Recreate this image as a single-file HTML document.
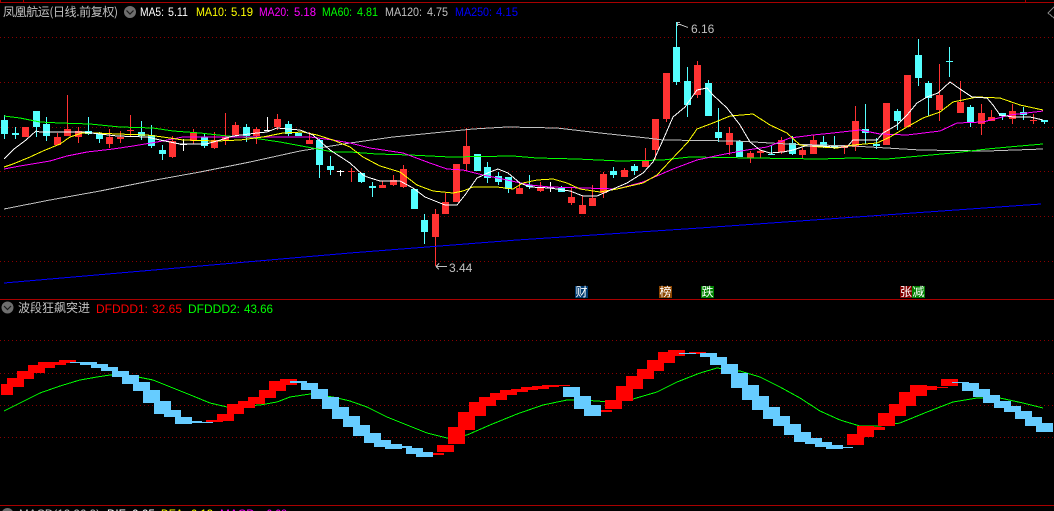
<!DOCTYPE html>
<html lang="zh">
<head>
<meta charset="utf-8">
<title>凤凰航运</title>
<style>
html,body{margin:0;padding:0;background:#000;width:1054px;height:511px;overflow:hidden}
svg{display:block;position:absolute;left:0;top:0}
text{font-family:"Liberation Sans","WenQuanYi Zen Hei","Noto Sans CJK SC",sans-serif;font-size:12px}
.cn{font-family:"WenQuanYi Zen Hei","Noto Sans CJK SC",sans-serif;font-size:12px}
polyline{fill:none;stroke-width:1}
</style>
</head>
<body>
<svg width="1054" height="511" viewBox="0 0 1054 511" xmlns="http://www.w3.org/2000/svg">
<rect width="1054" height="511" fill="#000"/>
<g shape-rendering="crispEdges">
<path d="M0 2.5H1054M0.5 0V2M23.5 0V2M1025.5 0V2M0 299.5H1054M0 505.5H1054" stroke="#a80000" fill="none"/>
<path d="M0 37.5H1054M0 82.5H1054M0 127.5H1054M0 171.5H1054M0 216.5H1054M0 261.5H1054M0 340.5H1054M0 373.5H1054M0 405.5H1054M0 437.5H1054" stroke="#8a0000" stroke-dasharray="1 3" fill="none"/>

<!-- cyan candles -->
<path stroke="#54ffff" fill="none" d="M4.5 115V139M15.5 127V139M36.5 111V137M46.5 117V141M88.5 117V135M99.5 132V143M141.5 121V140M151.5 125V148M162.5 145V160M204.5 134V148M246.5 124V142M288.5 121V136M298.5 133V136M319.5 139V178M330.5 156V175M361.5 173V183M372.5 182V197M424.5 214V244M487.5 162V183M498.5 172V185M508.5 177V193M529.5 175V189M561.5 186V192M613.5 167V178M634.5 164V175M676.5 22V85M687.5 67V117M708.5 80V116M718.5 108V142M739.5 140V157M771.5 145V155M792.5 136V155M823.5 136V148M834.5 136V149M865.5 104V144M876.5 138V149M897.5 109V130M918.5 39V86M928.5 81V116M949.5 47V77M970.5 105V127M1002.5 113V120M1023.5 107V120M1044.5 120V124"/>
<path fill="#54ffff" d="M1 120h7V134H1zM12 133h7V135H12zM33 111h7V127H33zM43 124h7V136H43zM85 131h7V134H85zM96 134h7V139H96zM138 132h7V136H138zM148 135h7V146H148zM159 150h7V154H159zM201 137h7V146H201zM243 127h7V136H243zM285 124h7V134H285zM295 133h7V136H295zM316 140h7V165H316zM327 166h7V170H327zM358 173h7V182H358zM369 186h7V188H369zM411 189h7V209H411zM421 220h7V232H421zM474 154h7V171H474zM484 167h7V178H484zM495 176h7V182H495zM505 177h7V189H505zM526 185h7V187H526zM558 188h7V192H558zM610 171h7V175H610zM631 166h7V171H631zM673 47h7V82H673zM684 81h7V105H684zM705 83h7V116H705zM715 132h7V138H715zM736 141h7V157H736zM768 154h7V155H768zM789 143h7V154H789zM820 142h7V147H820zM831 145h7V148H831zM862 129h7V133H862zM873 144h7V146H873zM894 111h7V121H894zM915 55h7V78H915zM925 83h7V98H925zM946 61h7V62H946zM967 107h7V122H967zM999 113h7V116H999zM1020 112h7V115H1020zM1041 120h7V122H1041z"/>

<!-- red candles -->
<path stroke="#ff3232" fill="none" d="M57.5 133V145M67.5 95V136M78.5 127V143M109.5 129V148M120.5 131V143M130.5 115V136M172.5 136V158M193.5 129V144M214.5 132V149M225.5 113V145M235.5 122V136M256.5 127V144M277.5 114V130M309.5 132V144M351.5 168V182M382.5 181V188M393.5 175V186M403.5 165V188M435.5 209V266M445.5 193V214M466.5 128V171M519.5 183V194M540.5 182V192M571.5 187V205M582.5 196V214M592.5 185V206M603.5 172V198M624.5 168V177M645.5 148V167M655.5 119V160M666.5 73V122M697.5 61V98M729.5 127V155M750.5 151V163M760.5 150V158M781.5 137V154M802.5 148V158M813.5 135V154M844.5 145V154M855.5 106V151M939.5 64V121M960.5 81V113M981.5 104V135M991.5 110V121M1012.5 104V124M1033.5 114V124"/>
<path fill="#ff3232" d="M22 127h7V137H22zM54 137h7V145H54zM64 129h7V136H64zM75 131h7V137H75zM106 137h7V144H106zM117 137h7V139H117zM127 130h7V131H127zM169 141h7V157H169zM190 132h7V141H190zM211 140h7V148H211zM222 137h7V140H222zM232 125h7V135H232zM253 129h7V136H253zM274 119h7V127H274zM306 140h7V144H306zM348 171h7V172H348zM379 185h7V188H379zM390 180h7V185H390zM400 169h7V187H400zM432 214h7V237H432zM442 202h7V214H442zM453 164h7V202H453zM463 146h7V164H463zM516 188h7V194H516zM537 188h7V191H537zM568 197h7V203H568zM579 205h7V214H579zM589 198h7V206H589zM600 174h7V193H600zM621 170h7V177H621zM642 160h7V167H642zM652 119h7V150H652zM663 73h7V119H663zM694 65h7V95H694zM726 133h7V145H726zM747 153h7V158H747zM757 151h7V153H757zM778 140h7V152H778zM799 150h7V155H799zM810 140h7V154H810zM841 145h7V148H841zM852 121h7V147H852zM883 103h7V145H883zM904 75h7V127H904zM936 95h7V110H936zM957 102h7V113H957zM978 113h7V124H978zM988 117h7V121H988zM1009 111h7V119H1009zM1030 120h7V121H1030z"/>

<!-- white doji -->
<path stroke="#fff" fill="none" d="M183.5 139V151M267.5 117V131M340.5 170V176M550.5 182V192M180 144.5H187M264 130.5H271M337 171.5H344M547 187.5H554"/>

<!-- moving averages -->
<polyline stroke="#c0c0c0" points="4,209 50,200 100,191 150,181 200,172 250,162 300,151 350,143 393,137 473,129 507,127 557,128 600,133 647,138 663,140 737,141 787,144 853,146 920,150 987,151 1043,149"/>
<polyline stroke="#00ff00" points="4,116 20,118 40,122 60,123 90,124 120,127 153,128 173,131 200,133 227,136 253,138 280,142 307,147 333,152 350,152 377,154 410,155 450,157 513,156 537,158 577,159 620,161 663,160 690,157 753,158 820,159 853,158 887,159 920,156 953,153 987,149 1020,146 1043,144"/>
<polyline stroke="#ff00ff" points="4,169 20,166 50,161 67,156 87,152 113,149 133,146 157,142 183,137 200,137 233,137 267,137 310,137 333,140 350,143 370,148 403,153 427,162 447,169 463,170 483,175 507,180 530,185 550,187 583,188 617,189 643,182 673,169 697,160 720,155 747,150 767,147 790,138 813,135 833,133 860,130 880,134 907,135 940,131 957,123 983,122 1010,115 1043,111"/>
<polyline stroke="#ffff00" points="4,167 13,164 30,157 43,151 60,144 70,137 82,133 97,133 117,134 147,135 163,137 183,140 217,141 240,140 263,137 283,133 303,132 317,135 333,140 350,147 363,157 380,166 400,172 417,185 433,191 453,193 463,191 473,187 497,187 513,189 523,183 537,180 553,179 567,183 580,189 600,192 617,189 630,186 643,183 657,175 670,161 688,142 697,129 713,123 730,116 753,114 770,125 787,133 800,145 820,147 837,148 853,145 877,143 890,137 907,127 923,118 940,112 953,102 977,97 1000,98 1020,105 1043,110"/>
<polyline stroke="#ffffff" points="4,159 14,149 26,140 36,131 40,132 83,132 117,136 147,137 160,140 180,144 206,144 217,141 233,136 257,133 267,132 277,128 300,130 313,135 330,150 350,163 363,175 367,177 380,181 400,181 413,188 425,197 445,205 457,205 465,195 477,178 490,172 498,169 508,173 520,183 530,187 550,188 570,191 583,196 597,196 613,189 627,183 643,173 653,162 663,140 673,117 685,107 697,90 707,88 713,95 727,108 740,125 750,142 760,150 770,153 783,152 793,150 805,146 820,146 833,147 847,147 853,140 877,140 883,133 897,125 907,115 917,103 927,97 938,93 950,82 960,89 972,97 987,98 993,105 1000,115 1013,117 1030,117 1043,120"/>
<polyline stroke="#0000ff" points="4,283 350,253 517,240 700,228 1041,204"/>

<!-- high/low callouts -->
<path stroke="#c0c0c0" fill="none" d="M677.5 22V26M678 22.5H680M678 24.5H680M680 24.5L688 27.5M436 266.5H447M436 266.5L439 263.5M436 266.5L439 269.5"/>

<!-- right chevron -->
<path stroke="#808080" fill="none" d="M1054 7L1048 13L1054 18"/>

<!-- oscillator signal -->
<polyline stroke="#00ff00" points="4,411 20,403 40,393 60,386 80,380 97,377 110,375 133,376 153,380 173,388 193,396 210,403 227,407 260,405 277,402 290,397 310,394 333,397 350,401 367,407 387,417 407,425 427,433 447,438 467,435 490,425 517,414 543,405 567,400 583,400 610,402 633,399 657,392 677,382 700,373 717,368 740,371 760,377 780,387 800,398 820,411 840,420 860,426 880,426 900,423 927,412 953,402 977,398 1000,398 1023,403 1043,408"/>

<!-- oscillator red blocks -->
<path fill="#ff0000" d="M1 384h12V395H1zM7 378h17V387H7zM17 371h17V379H17zM28 365h17V373H28zM38 362h17V368H38zM49 362h17V365H49zM59 360h17V363H59zM206 420h17V422H206zM217 414h17V421H217zM227 404h17V414H227zM238 401h17V408H238zM248 397h17V404H248zM259 390h17V398H259zM269 381h17V391H269zM280 379h17V385H280zM427 453h17V455H427zM437 445h17V452H437zM448 427h17V444H448zM458 412h17V430H458zM469 402h17V416H469zM479 397h17V406H479zM490 393h17V400H490zM500 390h17V395H500zM511 389h17V392H511zM521 387h17V390H521zM532 386h17V389H532zM542 385h17V387H542zM553 385h17V386H553zM595 410h17V412H595zM605 400h17V409H605zM616 386h17V401H616zM626 376h17V389H626zM637 369h17V379H637zM647 360h17V371H647zM658 352h17V363H658zM668 350h17V356H668zM689 352h17V354H689zM847 434h17V445H847zM857 426h17V437H857zM868 427h17V430H868zM878 413h17V426H878zM889 404h17V416H889zM899 392h17V406H899zM910 385h17V396H910zM920 386h17V390H920zM931 387h17V388H931zM941 379h17V386H941z"/>
<!-- oscillator blue blocks -->
<path fill="#66ccff" d="M70 362h17V363H70zM80 362h17V365H80zM91 364h17V368H91zM101 367h17V371H101zM112 371h17V377H112zM122 375h17V384H122zM133 382h17V391H133zM143 390h17V403H143zM154 401h17V414H154zM164 410h17V417H164zM175 417h17V424H175zM185 421h17V423H185zM196 422h17V423H196zM290 381h17V383H290zM301 383h17V390H301zM311 389h17V399H311zM322 397h17V409H322zM332 407h17V419H332zM343 416h17V427H343zM353 425h17V436H353zM364 433h17V443H364zM374 440h17V447H374zM385 444h17V449H385zM395 446h17V448H395zM406 448h17V454H406zM416 452h17V457H416zM563 387h17V397H563zM574 396h17V409H574zM584 405h17V416H584zM679 353h17V354H679zM700 353h17V357H700zM710 357h17V365H710zM721 364h17V374H721zM731 373h17V388H731zM742 385h17V400H742zM752 396h17V410H752zM763 407h17V419H763zM773 416h17V426H773zM784 424h17V435H784zM794 432h17V442H794zM805 438h17V444H805zM815 442h17V447H815zM826 445h17V449H826zM836 447h17V448H836zM952 382h17V383H952zM962 383h17V391H962zM973 389h17V397H973zM983 395h17V403H983zM994 401h17V408H994zM1004 406h17V412H1004zM1015 411h17V419H1015zM1025 417h17V426H1025zM1036 423h17V432H1036z"/>

<!-- marker backgrounds -->
<rect x="575" y="286" width="13" height="12" fill="#003a70"/>
<rect x="659" y="286" width="13" height="12" fill="#8b4500"/>
<rect x="701" y="286" width="13" height="12" fill="#008000"/>
<rect x="900" y="286" width="12" height="12" fill="#800000"/>
<rect x="912" y="286" width="13" height="12" fill="#008000"/>
</g>

<!-- dropdown icons -->
<circle cx="130" cy="12" r="6" fill="#6e6e6e"/>
<path d="M126.5 10.5L130 14L133.5 10.5" fill="none" stroke="#1a1a1a" stroke-width="1.2"/>
<circle cx="7.5" cy="307.5" r="6" fill="#6e6e6e"/>
<path d="M4 306L7.5 309.500L11 306" fill="none" stroke="#1a1a1a" stroke-width="1.2"/>
<circle cx="7.500" cy="514" r="6" fill="#6e6e6e"/>

<!-- main header -->
<text class="cn" x="3" y="16" fill="#c0c0c0" textLength="115" lengthAdjust="spacing">凤凰航运(日线.前复权)</text>
<text x="140" y="16" fill="#ffffff" textLength="24" lengthAdjust="spacingAndGlyphs">MA5:</text>
<text x="168" y="16" fill="#ffffff" textLength="20" lengthAdjust="spacingAndGlyphs">5.11</text>
<text x="196" y="16" fill="#ffff00" textLength="31" lengthAdjust="spacingAndGlyphs">MA10:</text>
<text x="231" y="16" fill="#ffff00" textLength="22" lengthAdjust="spacingAndGlyphs">5.19</text>
<text x="259" y="16" fill="#ff00ff" textLength="30" lengthAdjust="spacingAndGlyphs">MA20:</text>
<text x="294" y="16" fill="#ff00ff" textLength="22" lengthAdjust="spacingAndGlyphs">5.18</text>
<text x="322" y="16" fill="#00ff00" textLength="30" lengthAdjust="spacingAndGlyphs">MA60:</text>
<text x="357" y="16" fill="#00ff00" textLength="21" lengthAdjust="spacingAndGlyphs">4.81</text>
<text x="385" y="16" fill="#c0c0c0" textLength="37" lengthAdjust="spacingAndGlyphs">MA120:</text>
<text x="427" y="16" fill="#c0c0c0" textLength="21" lengthAdjust="spacingAndGlyphs">4.75</text>
<text x="455" y="16" fill="#0000ff" textLength="37" lengthAdjust="spacingAndGlyphs">MA250:</text>
<text x="496" y="16" fill="#0000ff" textLength="22" lengthAdjust="spacingAndGlyphs">4.15</text>

<!-- callout labels -->
<text x="691" y="33" fill="#c0c0c0">6.16</text>
<text x="449" y="272" fill="#c0c0c0">3.44</text>

<!-- markers -->
<text class="cn" x="575.500" y="296" fill="#fff">财</text>
<text class="cn" x="659.500" y="296" fill="#fff">榜</text>
<text class="cn" x="701.500" y="296" fill="#fff">跌</text>
<text class="cn" x="900" y="296" fill="#fff">张</text>
<text class="cn" x="912.500" y="296" fill="#fff">减</text>

<!-- lower header -->
<text class="cn" x="18" y="312" fill="#c0c0c0" textLength="72" lengthAdjust="spacing">波段狂飙突进</text>
<text x="96" y="313" fill="#ff0000" textLength="52" lengthAdjust="spacingAndGlyphs">DFDDD1:</text>
<text x="152" y="313" fill="#ff0000" textLength="30" lengthAdjust="spacingAndGlyphs">32.65</text>
<text x="188" y="313" fill="#00ff00" textLength="52" lengthAdjust="spacingAndGlyphs">DFDDD2:</text>
<text x="244" y="313" fill="#00ff00" textLength="29" lengthAdjust="spacingAndGlyphs">43.66</text>

<!-- bottom header -->
<text x="19" y="518" fill="#c0c0c0" textLength="81" lengthAdjust="spacingAndGlyphs">MACD(12,26,9)</text>
<text x="107" y="518" fill="#ffffff" textLength="22" lengthAdjust="spacingAndGlyphs">DIF:</text>
<text x="132" y="518" fill="#ffffff" textLength="23" lengthAdjust="spacingAndGlyphs">0.05</text>
<text x="161" y="518" fill="#ffff00" textLength="25" lengthAdjust="spacingAndGlyphs">DEA:</text>
<text x="191" y="518" fill="#ffff00" textLength="22" lengthAdjust="spacingAndGlyphs">0.13</text>
<text x="220" y="518" fill="#ff00ff" textLength="38" lengthAdjust="spacingAndGlyphs">MACD:</text>
<text x="263" y="518" fill="#ff00ff" textLength="24" lengthAdjust="spacingAndGlyphs">-0.08</text>
</svg>
</body>
</html>
